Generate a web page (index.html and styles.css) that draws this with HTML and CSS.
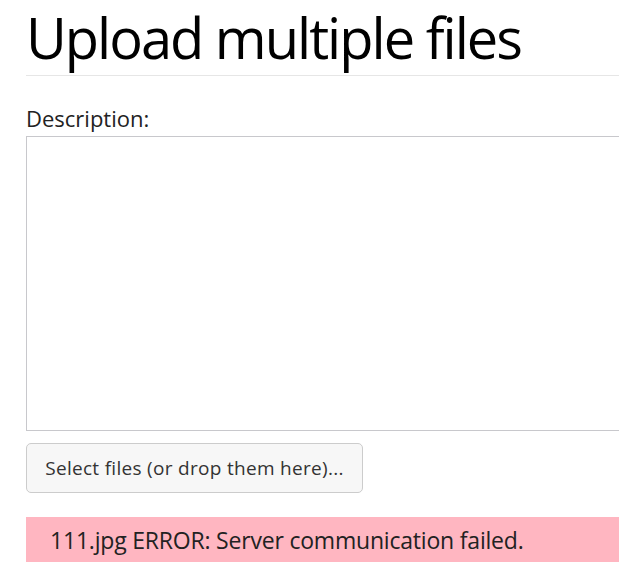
FILE: index.html
```html
<!DOCTYPE html>
<html lang="en">
<head>
<meta charset="utf-8">
<title>Upload multiple files</title>
<link rel="stylesheet" href="styles.css">
</head>
<body>
<main class="page">
  <h1 class="title">Upload multiple files</h1>
  <hr class="rule">
  <form class="upload-form">
    <label class="field-label" for="desc">Description:</label>
    <textarea class="description" id="desc"></textarea>
    <button type="button" class="select-btn">Select files (or drop them here)...</button>
  </form>
  <div class="status error">111.jpg ERROR: Server communication failed.</div>
</main>
</body>
</html>
```

FILE: styles.css
```css
html, body {
  margin: 0;
  padding: 0;
  overflow: hidden;
  background: #fff;
}

body {
  font-family: "Open Sans", "Noto Sans", sans-serif;
  color: #333;
}

.page {
  width: 640px;
  padding: 0 0 0 26px;
}

.title {
  margin: 0;
  padding-top: 5px;
  font-size: 56px;
  font-weight: 400;
  line-height: 64px;
  color: #000;
  letter-spacing: -2px;
}

.rule {
  margin: 6px 0 0 0;
  height: 0;
  border: 0;
  border-top: 1px solid #e6e6e6;
}

.upload-form {
  display: flex;
  flex-direction: column;
  align-items: flex-start;
  padding-top: 27px;
}

.field-label {
  font-size: 22px;
  line-height: 30px;
  margin-bottom: 3px;
  color: #222;
}

.description {
  display: block;
  box-sizing: border-box;
  width: 100%;
  height: 295px;
  margin: 0;
  border: 1px solid #c8c8cc;
  resize: none;
}

.select-btn {
  margin-top: 12px;
  box-sizing: border-box;
  height: 50px;
  width: 337px;
  padding: 0;
  font-family: inherit;
  font-size: 19px;
  letter-spacing: 0.3px;
  color: #333;
  background: #f7f7f7;
  border: 1px solid #cccccc;
  border-radius: 5px;
}

.status {
  margin-top: 24px;
  box-sizing: border-box;
  height: 45px;
  padding: 2px 24px 0;
  line-height: 43px;
  font-size: 23px;
  letter-spacing: -0.2px;
}

.error {
  background: #ffb6c1;
  color: #222;
}
```
